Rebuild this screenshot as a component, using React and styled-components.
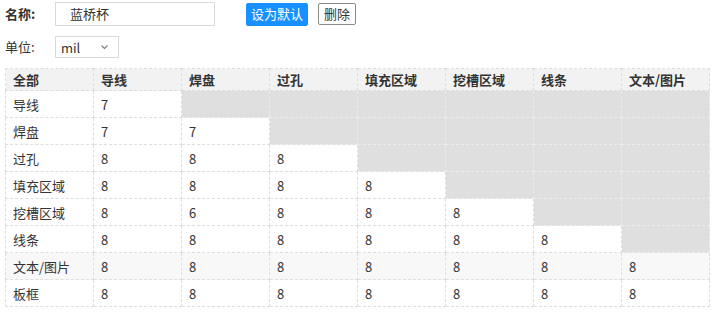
import React from "react";
import styled, { createGlobalStyle } from "styled-components";

const Global = createGlobalStyle`
  html, body { margin: 0; padding: 0; background: #fff; }
  body { font-family: "Noto Sans CJK SC", "Noto Sans", sans-serif; font-size: 13px; color: #333; }
`;

const Page = styled.div`
  padding: 2px 9px 0 5px;
`;

const Row = styled.div`
  display: flex;
  align-items: center;
  margin-bottom: ${(p) => p.$mb || 0}px;
`;

const Label = styled.span`
  width: 50px;
  font-weight: ${(p) => (p.$bold ? 700 : 400)};
  font-size: 13px;
  color: #333;
  line-height: 20px;
`;

const TextInput = styled.div`
  box-sizing: border-box;
  width: 160px;
  height: 24px;
  border: 1px solid #d9d9d9;
  padding-left: 14px;
  line-height: 22px;
  font-size: 13px;
  color: #333;
`;

const Button = styled.button`
  box-sizing: border-box;
  height: ${(p) => (p.$primary ? 23 : 22)}px;
  margin-left: ${(p) => p.$ml}px;
  padding: 0 ${(p) => (p.$primary ? 4 : 5)}px;
  font-family: inherit;
  font-size: 13px;
  line-height: 20px;
  border-radius: 2px;
  border: 1px solid ${(p) => (p.$primary ? "#1890ff" : "#8c8c8c")};
  background: ${(p) => (p.$primary ? "#1890ff" : "#fff")};
  color: ${(p) => (p.$primary ? "#fff" : "#333")};
  cursor: pointer;
`;

const Select = styled.div`
  box-sizing: border-box;
  width: 64px;
  height: 22px;
  border: 1px solid #d9d9d9;
  display: flex;
  align-items: center;
  justify-content: space-between;
  padding: 0 9px 0 5px;
  font-size: 13px;
  color: #333;
`;

const Table = styled.table`
  border-collapse: collapse;
  table-layout: fixed;
  width: 705px;
`;

const Th = styled.th`
  width: 88px;
  height: 22px;
  box-sizing: border-box;
  padding: 0 7px;
  text-align: left;
  font-weight: 700;
  font-size: 13px;
  color: #333;
  background: #f2f2f2;
  border: 1px dashed #dedede;
`;

const Td = styled.td`
  height: 26px;
  padding: 0 7px;
  font-size: 13px;
  color: #333;
  background: ${(p) => (p.$disabled ? "#dfdfdf" : p.$alt ? "#f8f8f8" : "#fff")};
  border: 1px dashed ${(p) => (p.$disabled ? "#ececec" : "#dedede")};
`;

const headers = ["全部", "导线", "焊盘", "过孔", "填充区域", "挖槽区域", "线条", "文本/图片"];
const rows = [
  ["导线", [7]],
  ["焊盘", [7, 7]],
  ["过孔", [8, 8, 8]],
  ["填充区域", [8, 8, 8, 8]],
  ["挖槽区域", [8, 6, 8, 8, 8]],
  ["线条", [8, 8, 8, 8, 8, 8]],
  ["文本/图片", [8, 8, 8, 8, 8, 8, 8]],
  ["板框", [8, 8, 8, 8, 8, 8, 8]],
];

const Chevron = () => (
  <svg width="9" height="6" viewBox="0 0 9 6">
    <path d="M1.5 1.5 L4.5 4.5 L7.5 1.5" fill="none" stroke="#777" strokeWidth="1.1" />
  </svg>
);

export default function App() {
  return (
    <>
      <Global />
      <Page>
        <Row $mb={10}>
          <Label $bold>名称:</Label>
          <TextInput>蓝桥杯</TextInput>
          <Button $primary $ml={31}>设为默认</Button>
          <Button $ml={10}>删除</Button>
        </Row>
        <Row $mb={10}>
          <Label>单位:</Label>
          <Select>
            <span>mil</span>
            <Chevron />
          </Select>
        </Row>
        <Table>
          <thead>
            <tr>
              {headers.map((h) => (
                <Th key={h}>{h}</Th>
              ))}
            </tr>
          </thead>
          <tbody>
            {rows.map(([name, vals], i) => (
              <tr key={name}>
                <Td $alt={i === 6}>{name}</Td>
                {Array.from({ length: 7 }).map((_, j) => (
                  <Td key={j} $disabled={j >= vals.length} $alt={i === 6}>
                    {j < vals.length ? vals[j] : ""}
                  </Td>
                ))}
              </tr>
            ))}
          </tbody>
        </Table>
      </Page>
    </>
  );
}
